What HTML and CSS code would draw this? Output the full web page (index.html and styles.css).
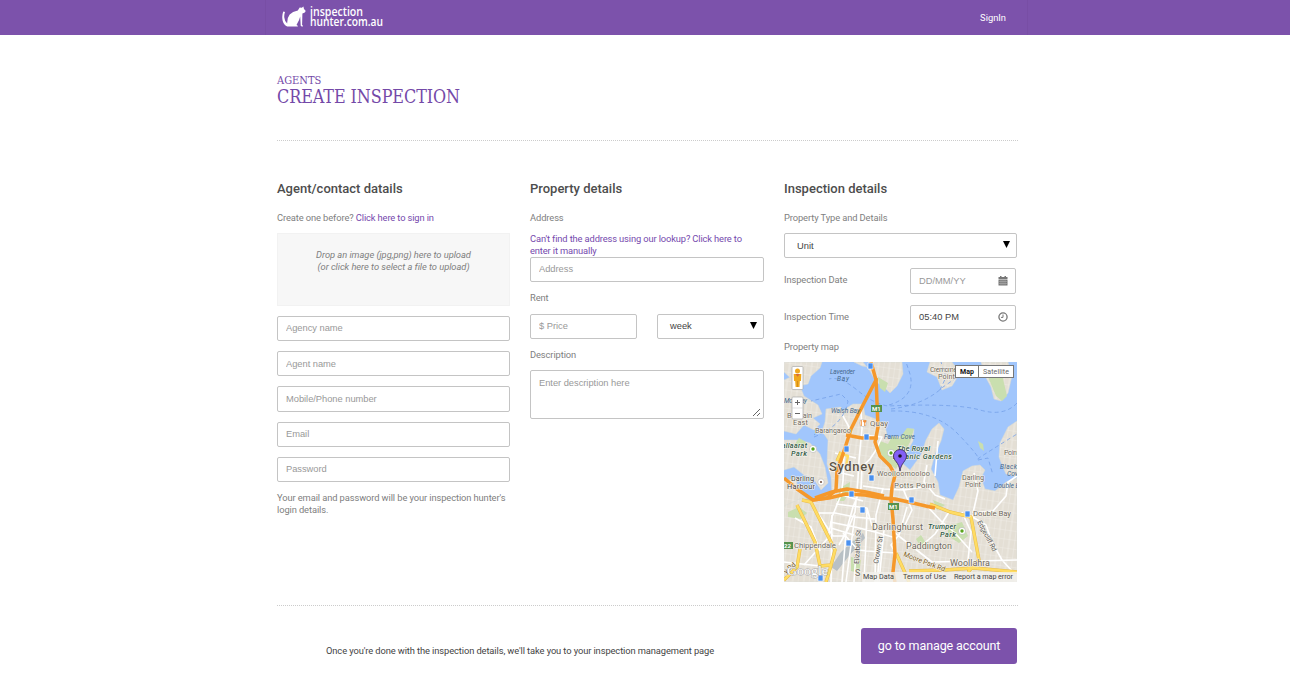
FILE: index.html
```html
<!DOCTYPE html>
<html lang="en">
<head>
<meta charset="utf-8">
<title>Create Inspection</title>
<link rel="stylesheet" href="styles.css">
</head>
<body>
<header class="topbar">
  <div class="topbar-inner">
    <a class="logo">
      <svg class="logo-cat" viewBox="0 0 25 22" width="25" height="22"><path d="M1.2 5.8Q-.4 10 .7 15Q2 19.2 5.3 20.5H15.8Q16.1 19.4 14.5 19Q17.5 14 18.2 10.5L18.7 19.8Q18.9 20.5 20.8 20.4Q21 19.2 20.1 19L20.4 7.5Q23.5 7 23.6 4.8L22 3L21.4.6L19.8 1.8L17.7 1.5L15.8 4.5Q10.5 5.7 7.7 8.6Q5 11.8 5.2 17.5Q2.7 15.5 2.3 11.5Q2 8.5 3 6.3Q2 4.8 1.2 5.8Z"/></svg>
      <svg class="logo-text" viewBox="0 0 76 24" width="76" height="24"><text x="0" y="9.5" textLength="53" lengthAdjust="spacingAndGlyphs">inspection</text><text x="0" y="20" textLength="73" lengthAdjust="spacingAndGlyphs">hunter.com.au</text></svg>
    </a>
    <a class="signin">SignIn</a>
  </div>
</header>
<main class="page">
  <div class="title"><p class="eyebrow">AGENTS</p><h1>CREATE INSPECTION</h1></div>
  <div class="columns">
    <section class="col">
      <h2>Agent/contact datails</h2>
      <p class="line">Create one before? <a>Click here to sign in</a></p>
      <div class="drop">Drop an image (jpg,png) here to upload<br>(or click here to select a file to upload)</div>
      <div class="stack">
        <input placeholder="Agency name">
        <input placeholder="Agent name">
        <input placeholder="Mobile/Phone number">
        <input placeholder="Email">
        <input placeholder="Password">
      </div>
      <p class="hint">Your email and password will be your inspection hunter's<br>login details.</p>
    </section>
    <section class="col">
      <h2>Property details</h2>
      <p class="line">Address</p>
      <p class="lookup"><a>Can't find the address using our lookup? Click here to<br>enter it manually</a></p>
      <input placeholder="Address">
      <p class="field-label">Rent</p>
      <div class="pair">
        <input placeholder="$ Price">
        <div class="select">week<svg width="7" height="7" viewBox="0 0 7 7"><path d="M0 0H7L3.5 7Z"/></svg></div>
      </div>
      <p class="field-label">Description</p>
      <div class="area"><span>Enter description here</span><svg width="9" height="9" viewBox="0 0 9 9"><path d="M1 8L8 1M5 8L8 5"/></svg></div>
    </section>
    <section class="col">
      <h2>Inspection details</h2>
      <p class="line">Property Type and Details</p>
      <div class="select type">Unit<svg width="7" height="7" viewBox="0 0 7 7"><path d="M0 0H7L3.5 7Z"/></svg></div>
      <div class="row"><span>Inspection Date</span>
        <div class="box empty">DD/MM/YY<svg width="10" height="10" viewBox="0 0 10 10"><path fill="#777" d="M.5 1H2V0H3.5V1H6.5V0H8V1H9.5V3H.5ZM.5 3.6H9.5V9.5H.5Z"/><path stroke="#bbb" stroke-width=".5" d="M.5 5.5H9.5M.5 7.5H9.5M3 3.6V9.5M5 3.6V9.5M7 3.6V9.5"/></svg></div></div>
      <div class="row second"><span>Inspection Time</span>
        <div class="box">05:40 PM<svg width="10" height="10" viewBox="0 0 10 10"><circle cx="5" cy="5" r="4.1" fill="none" stroke="#777" stroke-width="1.3"/><path d="M5 2.5V5.4H3" fill="none" stroke="#777"/></svg></div></div>
      <p class="map-label">Property map</p>
      <svg class="map" viewBox="0 0 233 220" width="233" height="220">
        <defs>
          <pattern id="blocks" width="11" height="9" patternUnits="userSpaceOnUse" patternTransform="rotate(8)"><rect width="11" height="9" fill="#e4dfd5"/><path d="M0 0H11M0 0V9M6 0V9" stroke="#f3f0ea" stroke-width=".7"/></pattern>
        </defs>
        <rect width="233" height="220" fill="#a1c6fc"/>
        <g fill="url(#blocks)" stroke="#d6dbd5" stroke-width=".5">
          <path d="M0 0H38L36 6L27 14L24 22L15 24L0 10Z"/>
          <path d="M70 0H79L86 9L92 20L99 24L106 31L113 24L119 12L118 0H88L84 5L78 4Z"/>
          <path d="M0 18L11 13L16 24L20 34L34 43L38 52L29 56L36 62L30 68L20 63L12 72L0 69Z"/>
          <path d="M0 78L14 78L26 81L36 92L41 105L44 121L37 128L29 116L20 113L10 105L0 108Z"/>
          <path d="M146 0H168L176 11L168 24L158 28L153 15L143 10Z"/>
          <path d="M197 0H224L228 14L224 31L217 39L210 37L207 25L201 14Z"/>
          <path d="M42 47L57 45L58 49L69 42L79 42L81 53L92 57L101 64L104 77L112 74L119 75L124 67L130 67L129 79L122 92L118 101L126 108L137 93L142 78L148 67L155 61L160 67L157 79L151 92L147 107L154 120L156 133L169 138L175 125L179 109L188 104L196 103L201 108L197 116L201 127L211 129L222 120L233 116V220H0V133L17 132L25 139L40 137L48 132L47 115L43 102L44 78L38 69L41 60Z"/>
          <path d="M218 103L215 95L216 81L224 65L233 59V115L222 112Z"/>
          <path d="M0 119L12 116L14 129L20 135L0 144Z"/>
        </g>
        <g fill="#c9dfaf">
          <path d="M104 82L108 74L115 77L123 66L130 67L126 80L118 96L112 107L104 101L97 92L91 89L96 79Z"/>
          <path d="M56 126L66 120L65 132L60 139L53 139ZM67 195L77 198L75 211L67 209ZM164 164L178 160L184 174L175 181L164 174Z"/>
          <path d="M15 76L22 80L18 88L11 82ZM202 10L217 8L223 34L218 39L212 34ZM194 79L199 82L200 89L196 86Z"/>
          <path d="M4 150L15 145L23 151L17 157L4 155ZM132 177L137 173L143 183L138 187ZM94 15L104 21L101 30L96 26ZM149 138L161 143L153 148Z"/>
        </g>
        <path fill="#b8c0c5" d="M47 205L57 190L69 179L79 171L81 176L65 194L53 209Z"/>
        <g fill="none" stroke="#739fe8" stroke-width=".8" stroke-dasharray="4 3">
          <path d="M233 41Q220 55 196 48T104 44Q90 42 73 28T45 17"/><path d="M107 47Q140 43 159 25L178 12"/><path d="M107 49Q151 48 174 72T194 97T233 72M156 28L162 15L157 0M105 43Q132 35 126 12L122 0M30 75Q60 63 64 39L57 32L27 39M30 73L37 67M194 98L204 96L209 113"/>
        </g>
        <g fill="none" stroke="#fff" stroke-width="1.6" stroke-linejoin="round">
          <path d="M59 54L65 65L60 94L59 119L57 133L48 155L44 176L20 203M77 49L78 67L75 98L74 117L71 150L64 167L55 183M79 73L98 75L92 88L86 97L78 105L77 126L69 145L62 170L58 220"/>
          <path d="M35 151L51 151L71 155L91 157M46 160L71 165L91 170L112 176M52 142L83 146L88 164M59 171L74 188L95 190L114 191M79 124L100 127L120 128L140 125M42 133L61 134L79 139M29 144L49 174L62 174M99 126L92 153L91 220M71 153L65 198L62 220M83 146L82 178L80 220M97 180L93 220M11 156L27 165L36 189M0 200L36 204M117 122L128 148L120 165L109 169L116 175L148 200L233 198M123 145L115 173L107 183L114 195M141 142L157 159L171 171L188 190M165 150L151 172L136 185M187 154L202 163L208 180L218 198L228 209M187 154L196 150L209 149L222 134L224 120L233 114M143 103L140 120L151 133L161 137M190 111L194 129L189 151M151 114L154 79M64 73L84 77M51 91L72 96M45 108L70 114"/>
          <path d="M47 166L70 173M48 153L47 220M72 190L70 220M100 168L95 220M178 150L187 170L184 198"/>
        </g>
        <g fill="none" stroke-linejoin="round">
          <path stroke="#e7bc4b" stroke-width="3.4" d="M18 138L27 140L37 160L51 188L46 207L42 220M13 143L31 180L36 204L47 203M53 99L57 90M146 142L166 150L187 155L195 198L184 210M112 191L122 213L125 220M125 209L160 208L190 206L233 210M16 187L13 205L0 218"/>
          <path stroke="#ffdc63" stroke-width="2.4" d="M18 138L27 140L37 160L51 188L46 207L42 220M13 143L31 180L36 204L47 203M53 99L57 90M58 92L64 94L62 104M146 142L166 150L187 155L195 198L184 210M112 191L122 213L125 220M125 209L160 208L190 206L233 210M16 187L13 205L0 218"/>
          <g stroke="#f5982b" stroke-width="3.5"><path d="M87 0L92 18L79 43L67 67L61 86L57 98L53 108L52 128L43 136L29 138L13 127L0 116"/><path d="M92 16L94 65L91 80L96 94L106 104L111 113L108 126L107 137L109 157L111 192L109 210L111 220"/><path d="M62 73L78 76L94 76M28 138L45 136L62 132L81 133L98 136L111 137L129 141L146 145L151 146"/><path d="M31 136L48 130L63 127L82 130L100 134"/></g>
        </g>
        <g class="shield"><rect x="87" y="43" width="11" height="7"/><rect x="104" y="141" width="11" height="7"/><rect x="0" y="180" width="9" height="7"/><text x="88" y="49">M1</text><text x="105" y="147">M1</text><text x="0" y="186">22</text></g>
        <g fill="#4b91ef" stroke="#fff" stroke-width=".6"><path d="M84 1h5v6h-5zM80 72h5v6h-5zM60 84h5v6h-5zM65 129h5v6h-5zM85 113h5v6h-5zM76 145h5v6h-5zM62 178h5v6h-5zM34 213h5v6h-5zM125 135h5v6h-5zM181 149h5v6h-5z"/></g>
        <g fill="#fff" stroke="#aaa" stroke-width=".5"><circle cx="29" cy="87" r="3.6"/><circle cx="107" cy="91" r="3.6"/><circle cx="37" cy="120" r="3.2"/><circle cx="178" cy="169" r="3.6"/><circle cx="79" cy="61" r="3.7"/></g>
        <g fill="#59a41c"><circle cx="29" cy="87" r="1.7"/><circle cx="107" cy="91" r="1.7"/><circle cx="178" cy="169" r="1.7"/><circle cx="37" cy="120" r="1.1" fill="#754"/><path d="M77.2 58V64M80.8 58V64M79.8 58V60H81.8V58" stroke="#ef8425" fill="none"/></g>
        <g class="place">
          <text x="46" y="12" class="sea" textLength="25">Lavender</text><text x="53" y="19" class="sea" textLength="12">Bay</text>
          <text x="0" y="41" class="sea" textLength="23">Mort Bay</text><text x="47" y="51" class="sea" textLength="29">Walsh Bay</text>
          <text x="3" y="56" textLength="25">Balmain</text><text x="9" y="63" textLength="15">East</text><text x="86" y="64" textLength="18" class="mid">Quay</text>
          <text x="31" y="71" textLength="36">Barangaroo</text><text x="100" y="77" class="sea" textLength="31">Farm Cove</text>
          <text x="-7" y="86" class="park" textLength="30">Ballaarat</text><text x="7" y="94" class="park" textLength="16">Park</text>
          <text x="113" y="89" class="park" textLength="33">The Royal</text><text x="109" y="97" class="park" textLength="59">Botanic Gardens</text>
          <text x="45" y="109" class="city" textLength="45">Sydney</text><text x="93" y="114" textLength="53">Woolloomooloo</text><text x="110" y="126" class="mid" textLength="41">Potts Point</text>
          <text x="7" y="119" class="dark" textLength="23">Darling</text><text x="3" y="127" class="dark" textLength="28">Harbour</text>
          <text x="178" y="118" textLength="22">Darling</text><text x="181" y="125" textLength="16">Point</text><text x="146" y="10" textLength="27">Cremorne</text><text x="154" y="17" textLength="17">Point</text>
          <text x="220" y="93" textLength="15">Point</text><text x="216" y="107" class="sea" textLength="17">Black</text><text x="223" y="114" class="sea">Cove</text><text x="210" y="126" class="sea" textLength="32">Double Bay</text>
          <text x="189" y="154" class="mid" textLength="38">Double Bay</text><text x="88" y="168" class="large" textLength="51">Darlinghurst</text>
          <text x="144" y="167" class="park" textLength="28">Trumper</text><text x="156" y="175" class="park" textLength="16">Park</text>
          <text x="10" y="186" class="mid" textLength="42">Chippendale</text><text x="122" y="187" class="large" textLength="46">Paddington</text><text x="166" y="204" class="large" textLength="40">Woollahra</text>
          <text x="71" y="214" class="large">S</text>
          <text class="road" textLength="34" transform="translate(75 202) rotate(-87)">Elizabeth St</text><text class="road" textLength="28" transform="translate(94 202) rotate(-80)">Crown St</text>
          <text class="road moore" textLength="44" transform="translate(119 194) rotate(21)">Moore Park Rd</text><text class="road" textLength="34" transform="translate(193 160) rotate(62)">Edgecliff Rd</text><text class="road moore" transform="translate(2 212) rotate(-40)">y Rd</text>
        </g>
        <rect x="78" y="210" width="155" height="10" fill="#f3f1ed" opacity=".8"/>
        <text x="3" y="213" class="google" textLength="41" lengthAdjust="spacingAndGlyphs">Google</text>
        <g class="legal"><text x="79" y="217" textLength="31">Map Data</text><text x="119" y="217" textLength="43">Terms of Use</text><text x="170" y="217" textLength="59">Report a map error</text></g>
        <path d="M116 109C115 100 109.5 99 109.5 94A6.5 6.5 0 0 1 122.5 94C122.5 99 117 101 116 109Z" fill="#8360f5" stroke="#30254d" stroke-width=".8"/><circle cx="116" cy="94" r="1.8" fill="#171020"/>
        <rect x="8" y="4.5" width="11" height="23" rx="1" fill="#fff" stroke="#aaa" stroke-width=".7"/><circle cx="13.5" cy="9" r="2.5" fill="#efa81f"/><path d="M9.7 12H17.3L17 19H15.8L15.5 25H11.6L11.2 19H10Z" fill="#efa81f"/><path d="M11.3 12H15.8L13.7 14.8Z" fill="#d86a38"/><path d="M13.5 19V25" stroke="#b87510" stroke-width=".5"/>
        <rect x="8" y="35" width="11" height="22" rx="1" fill="#fff" stroke="#aaa" stroke-width=".7"/><path d="M8 46H19" stroke="#ccc" stroke-width=".6"/><path d="M11 40.5H16M13.5 38V43M11 51.5H16" stroke="#666" stroke-width="1"/>
        <rect x="171.5" y="3.5" width="58" height="12" fill="#fff" stroke="#777"/><path d="M194.5 4V15" stroke="#777"/><text x="176" y="12" class="active" textLength="14">Map</text><text x="199" y="12" class="satellite" textLength="26">Satellite</text>
      </svg>
    </section>
  </div>
  <footer class="foot"><p>Once you're done with the inspection details, we'll take you to your inspection management page</p><button>go to manage account</button></footer>
</main>
</body>
</html>
```
FILE: styles.css
```css
* { box-sizing: border-box; }
body { margin: 0; background: #fff; color: #808080; font: 9.33px/12px Roboto, sans-serif; letter-spacing: -.1px; }
p, h1, h2 { margin: 0; }
a { color: #7549ad; letter-spacing: -.13px; }
.topbar { height: 35px; background: #7c52ab; }
.topbar-inner { width: 763px; height: 35px; margin-left: 265px; padding: 0 21px 0 16px; display: flex; justify-content: space-between; border: solid #784ea5; border-width: 0 1px; }
.logo { display: flex; padding-top: 6px; gap: 3px; letter-spacing: 0; }
.logo-cat { fill: #fff; }
.logo-text { font: 600 12px "Open Sans", sans-serif; fill: #fff; }
.signin { color: #fff; line-height: 36px; letter-spacing: 0; }
.page { width: 741px; margin-left: 277px; }
.title { height: 106px; padding-top: 40px; border-bottom: 1px dotted #ccc; color: #7449a8; font-family: "DejaVu Serif Condensed", "DejaVu Serif", serif; }
.eyebrow { font-size: 11px; line-height: 12px; letter-spacing: 0; }
h1 { font-size: 17.8px; font-weight: 400; line-height: 20px; letter-spacing: -.06px; white-space: nowrap; }
.columns { height: 465px; padding-top: 39px; display: grid; grid-template-columns: 233px 234px 233px; column-gap: 20px; border-bottom: 1px dotted #ccc; }
h2 { color: #4d4d4d; font-size: 13px; line-height: 17px; font-weight: 500; letter-spacing: 0; margin-bottom: 15px; }
.line { height: 21px; }
.drop { height: 73px; padding-top: 15px; background: #f7f7f7; border: 1px solid #f2f2f2; text-align: center; font-style: italic; letter-spacing: -.04px; }
.stack { margin-top: 10px; display: grid; gap: 10px; }
input, .select, .area, .box { border: 1px solid #c4c4c4; border-radius: 2px; background: #fff; font: 9.33px/12px "Liberation Sans", sans-serif; color: #444; letter-spacing: 0; }
input { display: block; width: 100%; height: 25.2px; padding: 0 8px .4px; letter-spacing: -.03px; }
input::placeholder { color: #999; }
.hint { margin-top: 10px; white-space: nowrap; }
.lookup { height: 24px; }
.field-label { padding-top: 10px; height: 31.4px; }
.pair { display: grid; grid-template-columns: 107px 107px; gap: 20px; }
.pair input { height: 25px; padding-bottom: 1px; }
.select { height: 25px; padding: 0 6px 1px 12px; display: flex; align-items: center; justify-content: space-between; }
.select.type { padding-bottom: 0; }
.select.type svg { margin-bottom: 2px; }
.area { height: 49px; padding: 6px 2px 1px 8px; display: flex; justify-content: space-between; color: #999; letter-spacing: -.03px; }
.area svg { align-self: flex-end; fill: none; stroke: #666; }
.row { height: 26px; margin-top: 10px; display: flex; justify-content: space-between; line-height: 24px; }
.row.second { margin-top: 11px; height: 25px; }
.box { width: 106px; margin-right: 1px; padding: 0 7px 0 8px; display: flex; align-items: center; justify-content: space-between; }
.second .box { padding-bottom: 1px; }
.empty { color: #999; }
.map-label { margin-top: 11px; height: 21px; }
.map { display: block; font-family: Roboto, sans-serif; letter-spacing: 0; }
.place { font-size: 7.3px; fill: #6f695e; paint-order: stroke; stroke: #f5f2ea; stroke-width: 1.2px; stroke-linejoin: round; }
.sea { fill: #46698f; font-style: italic; font-size: 6.6px; stroke: none; }
.park { fill: #2f5947; font-style: italic; font-weight: 500; }
.dark { fill: #454545; }
.mid { font-size: 7.9px; }
.large { font-size: 9px; }
.city { font-size: 13px; font-weight: 500; fill: #5d5548; }
.road { font-size: 7px; fill: #555; }
.moore { fill: #7a5a1c; }
.shield rect { fill: #55924d; }
.shield text { font-size: 6px; font-weight: 700; fill: #fff; }
.google { font: 13px "Liberation Serif", serif; fill: #fff; stroke: #aaa; stroke-width: 1px; paint-order: stroke; }
.legal { font-size: 7.2px; fill: #444; }
.active { font-size: 7px; font-weight: 700; fill: #111; }
.satellite { font-size: 7px; fill: #666; }
.foot { padding: 22px 1px 0 49px; display: flex; justify-content: space-between; color: #444; }
.foot p { padding-top: 17px; }
button { width: 156px; height: 36px; padding: 0 0 1px; border: 0; border-radius: 3px; background: #7c52ab; color: #fff; font: 12.5px Roboto, sans-serif; letter-spacing: -.1px; }
```
